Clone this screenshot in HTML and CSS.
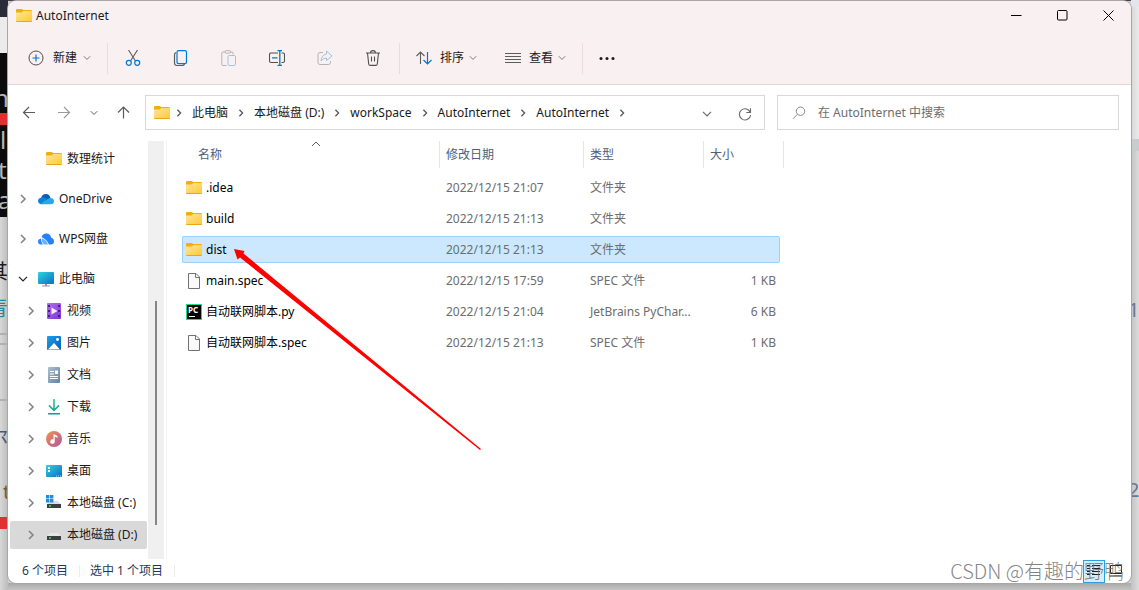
FILE: index.html
```html
<!DOCTYPE html>
<html lang="zh-CN">
<head>
<meta charset="utf-8">
<title>AutoInternet</title>
<link rel="stylesheet" href="styles.css">
</head>
<body>
<svg class="defs" aria-hidden="true">
  <defs>
    <linearGradient id="g-folder" x1="0" y1="0" x2="1" y2="1"><stop offset="0" stop-color="#ffe69c"/><stop offset="1" stop-color="#ffc933"/></linearGradient>
    <linearGradient id="g-screen" x1="0" y1="0" x2="1" y2="1"><stop offset="0" stop-color="#2fd3df"/><stop offset="1" stop-color="#0b6fc0"/></linearGradient>
    <linearGradient id="g-video" x1="0" y1="0" x2="1" y2="1"><stop offset="0" stop-color="#b56cf5"/><stop offset="1" stop-color="#7d35d6"/></linearGradient>
    <linearGradient id="g-pic" x1="0" y1="0" x2="1" y2="1"><stop offset="0" stop-color="#1ca0ee"/><stop offset="1" stop-color="#0a5cab"/></linearGradient>
    <linearGradient id="g-doc" x1="0" y1="0" x2="1" y2="1"><stop offset="0" stop-color="#abc0d4"/><stop offset="1" stop-color="#64819d"/></linearGradient>
    <linearGradient id="g-down" x1="0" y1="0" x2="0" y2="1"><stop offset="0" stop-color="#35c48e"/><stop offset="1" stop-color="#0d9b8f"/></linearGradient>
    <linearGradient id="g-music" x1="0" y1="0" x2="1" y2="1"><stop offset="0" stop-color="#f29050"/><stop offset="1" stop-color="#b1569c"/></linearGradient>
    <symbol id="i-folder" viewBox="0 1 16 16"><path d="M0 3.200Q0 2 1.200 2H5.500Q6.500 2 7 3H14.800Q16 3 16 4.200V8H0Z" fill="#f3ad0c"/><path d="M0 5.500H5.600L7.400 4H15Q16 4 16 5V14Q16 15 15 15H1Q0 15 0 14Z" fill="url(#g-folder)"/><path d="M0 14Q.2 15 1 15H15Q15.800 15 16 14Z" fill="#e9a81c"/></symbol>
    <symbol id="i-right" viewBox="0 0 8 10"><path d="M2 1L6 5L2 9" fill="none" stroke="currentColor" stroke-width="1.600"/></symbol>
    <symbol id="i-down" viewBox="0 0 10 6"><path d="M1 .8L5 4.800L9 .8" fill="none" stroke="currentColor" stroke-width="1.200"/></symbol>
    <symbol id="i-file" viewBox="0 0 16 16"><path d="M2.500 .5H10L13.500 4V15.500H2.500Z" fill="#fafafa" stroke="#727272"/><path d="M9.500 .5V4.500H13.500" fill="none" stroke="#727272"/></symbol>
  </defs>
</svg>
<div class="desktop">
  <aside class="strip" aria-hidden="true">
    <div class="seg s-navy"></div>
    <div class="seg s-pale"></div>
    <div class="seg s-term"><span>n</span><i></i><span class="t-l">l</span><span>t</span><span>a</span></div>
    <div class="seg s-page"><span class="p-han">其</span><span class="p-blue">青</span><hr><hr class="p-second"><hr class="p-third"><span class="p-steel">尔</span><span class="p-gold">t</span><i></i></div>
  </aside>

  <main class="window">
    <header class="chrome">
      <div class="titlebar">
        <svg class="ico"><use href="#i-folder"/></svg>
        <h1>AutoInternet</h1>
        <div class="caption">
          <button aria-label="最小化"><svg width="11" height="11" viewBox="0 0 11 11"><path d="M0 5.500H10.500" stroke="#000"/></svg></button>
          <button aria-label="最大化"><svg width="11" height="11" viewBox="0 0 11 11"><rect x=".5" y=".5" width="9.500" height="9.500" rx="1" fill="none" stroke="#000"/></svg></button>
          <button aria-label="关闭"><svg width="11" height="11" viewBox="0 0 11 11"><path d="M.5 .5L10.500 10.500M10.500 .5L.5 10.500" stroke="#000"/></svg></button>
        </div>
      </div>
      <div class="toolbar">
        <button class="cmd"><svg class="ico" viewBox="0 0 16 16" fill="none"><circle cx="8" cy="8" r="7" stroke="#505050"/><path d="M8 4.500V11.500M4.500 8H11.500" stroke="#0078d4" stroke-width="1.200"/></svg>新建<svg class="tiny"><use href="#i-down"/></svg></button>
        <span class="sep"></span>
        <div class="tools">
          <button aria-label="剪切"><svg class="ico" viewBox="0 0 16 16" fill="none"><path d="M3.500 0L10.500 11M12.500 0L5.500 11" stroke="#5c5c5c" stroke-width="1.100"/><circle cx="3.800" cy="12.800" r="2.500" stroke="#0078d4" stroke-width="1.200"/><circle cx="12.200" cy="12.800" r="2.500" stroke="#0078d4" stroke-width="1.200"/></svg></button>
          <button aria-label="复制"><svg class="ico" viewBox="0 0 16 16" fill="none"><path d="M3 2.500Q1.500 3 1.500 5V13Q1.500 15.500 4 15.500H9Q11 15.500 11.500 14" stroke="#5c5c5c" stroke-width="1.200"/><rect x="4" y=".6" width="9.500" height="13" rx="1.600" stroke="#0078d4" stroke-width="1.200"/></svg></button>
          <button aria-label="粘贴"><svg class="ico" viewBox="0 0 16 16" fill="none"><path d="M5.500 15.500H2Q.8 15.500 .8 14.300V3Q.8 2 2 2H4M9 2H11Q12 2 12 3V4.500" stroke="#b9b1b2"/><rect x="4" y=".6" width="5.500" height="2.600" rx="1.200" stroke="#b9b1b2"/><rect x="7" y="5.500" width="7.500" height="10" rx="1.200" stroke="#9dc3e6"/></svg></button>
          <button aria-label="重命名"><svg class="ico" viewBox="0 0 16 16" fill="none"><path d="M9 3H2Q.5 3 .5 4.500V11Q.5 12.500 2 12.500H9M12.500 3H14Q15.500 3 15.500 4.500V11Q15.500 12.500 14 12.500H12.500" stroke="#505050" stroke-width="1.100"/><path d="M3 7.800H8.500M8.500 .6H13M8.500 15.400H13M10.800 .6V15.400" stroke="#0078d4" stroke-width="1.300"/></svg></button>
          <button aria-label="共享"><svg class="ico" viewBox="0 0 16 16" fill="none"><path d="M6 2.500H3Q1 2.500 1 4.500V12.500Q1 14.500 3 14.500H11.500Q13.500 14.500 13.500 12.500V11" stroke="#b9b1b2"/><path d="M9.500 1L15 6L9.500 10.500V8Q6 8 4 11Q4.500 5 9.500 4Z" stroke="#9dc3e6"/></svg></button>
          <button aria-label="删除"><svg class="ico" viewBox="0 0 16 16" fill="none" stroke="#505050" stroke-width="1.100"><path d="M1 3H15M5.500 3Q5.500 .6 8 .6T10.500 3M2.500 3L3.700 14Q3.900 15.400 5.200 15.400H10.800Q12.100 15.400 12.300 14L13.500 3M6.500 6.500V11.500M9.500 6.500V11.500"/></svg></button>
        </div>
        <span class="sep"></span>
        <button class="cmd"><svg class="ico" viewBox="0 0 16 16" fill="none"><path d="M4.500 14V2M.5 6L4.500 2L8.500 6" stroke="#5c5c5c" stroke-width="1.100"/><path d="M11.500 2V14M7.500 10L11.500 14L15.500 10" stroke="#0078d4" stroke-width="1.200"/></svg>排序<svg class="tiny"><use href="#i-down"/></svg></button>
        <button class="cmd cmd-view"><svg class="ico" viewBox="0 0 16 16"><path d="M0 3.500H16M0 6.500H16M0 9.500H16M0 12.500H16" stroke="#5c5c5c"/></svg>查看<svg class="tiny"><use href="#i-down"/></svg></button>
        <span class="sep"></span>
        <button class="more" aria-label="更多"><svg class="ico" viewBox="0 0 16 16" fill="#1a1a1a"><circle cx="2" cy="8.500" r="1.500"/><circle cx="8" cy="8.500" r="1.500"/><circle cx="14" cy="8.500" r="1.500"/></svg></button>
      </div>
    </header>

    <div class="navrow">
      <div class="history">
        <button aria-label="后退"><svg width="14" height="14" viewBox="0 0 14 14" fill="none" stroke="#5c5c5c" stroke-width="1.200"><path d="M13 6.500H1.500M7 1L1.500 6.500L7 12"/></svg></button>
        <button aria-label="前进"><svg width="14" height="14" viewBox="0 0 14 14" fill="none" stroke="#9a9a9a" stroke-width="1.200"><path d="M1 6.500H12.500M7 1L12.500 6.500L7 12"/></svg></button>
        <button class="recent" aria-label="最近"><svg class="tiny"><use href="#i-down"/></svg></button>
        <button aria-label="上移"><svg width="14" height="14" viewBox="0 0 14 14" fill="none" stroke="#5c5c5c" stroke-width="1.200"><path d="M7.500 12.500V1M2 6.500L7.500 1L13 6.500"/></svg></button>
      </div>
      <nav class="address" aria-label="路径">
        <svg class="ico"><use href="#i-folder"/></svg>
        <svg class="sepchev"><use href="#i-right"/></svg><a href="#">此电脑</a>
        <svg class="sepchev"><use href="#i-right"/></svg><a href="#">本地磁盘 (D:)</a>
        <svg class="sepchev"><use href="#i-right"/></svg><a href="#">workSpace</a>
        <svg class="sepchev"><use href="#i-right"/></svg><a href="#">AutoInternet</a>
        <svg class="sepchev"><use href="#i-right"/></svg><a href="#">AutoInternet</a>
        <svg class="sepchev"><use href="#i-right"/></svg>
        <div class="address-end">
          <button aria-label="展开"><svg width="10" height="6"><use href="#i-down"/></svg></button>
          <button aria-label="刷新"><svg width="14" height="14" viewBox="0 0 14 14" fill="none" stroke="#6a6a6a" stroke-width="1.100"><path d="M12.300 5.500A5.600 5.600 0 1 0 12.600 8M12.500 1.200V5.500H8.300"/></svg></button>
        </div>
      </nav>
      <label class="search">
        <svg width="14" height="14" viewBox="0 0 14 14" fill="none" stroke="#8a8a8a"><circle cx="8.500" cy="5.200" r="4.200"/><path d="M5.500 8.200L1 12.800"/></svg>
        <input type="search" aria-label="搜索" placeholder="在 AutoInternet 中搜索">
      </label>
    </div>

    <div class="body">
      <nav class="tree" aria-label="导航窗格">
        <ul>
          <li class="pinned child"><a href="#"><span class="twist"></span><svg class="ico"><use href="#i-folder"/></svg>数理统计</a></li>
          <li class="root"><a href="#"><svg class="twist"><use href="#i-right"/></svg><svg class="ico" viewBox="0 0 16 16"><path d="M3 8Q3.500 3 8 3Q11.500 3 12.500 7L8 10Z" fill="#0a5eb8"/><path d="M3.500 6.500Q6 5.500 9 8L4 13.200Q0 13 0 10Q0 7 3.500 6.500Z" fill="#1180d8"/><path d="M12 7Q16 7 16 10.300Q16 13.200 13 13.200H4Q3 13.200 2.500 12.900L9 8.500Q10.500 7 12 7Z" fill="#28a8ea"/></svg>OneDrive</a></li>
          <li class="root"><a href="#"><svg class="twist"><use href="#i-right"/></svg><svg class="ico" viewBox="0 0 16 16"><path d="M3.500 6Q5 2 9 2.500Q12.500 3 13 6.500Q16 7.500 16 10.500Q16 13.500 13 13.500H11Q9 8.500 3.500 6Z" fill="#2680f8"/><path d="M3 7.500Q0 8 0 10.800Q0 13.500 3 13.500H5Q3 11 3 7.500Z" fill="#2f86fa"/><path d="M3.700 7.200Q8.500 8.500 10 13.500H6Q3.500 11 3.700 7.200Z" fill="#62b4ff"/></svg>WPS网盘</a></li>
          <li class="root"><a href="#"><svg class="twist open" viewBox="0 0 10 6"><use href="#i-down"/></svg><svg class="ico" viewBox="0 0 16 16"><rect y="1" width="16" height="12" rx="1" fill="url(#g-screen)"/><path d="M7 13H9V14.500H12V15.500H4V14.500H7Z" fill="#8c9aa5"/></svg>此电脑</a></li>
          <li class="child"><a href="#"><svg class="twist"><use href="#i-right"/></svg><svg class="ico" viewBox="0 0 16 16"><rect x="1" width="14" height="16" rx="1" fill="url(#g-video)"/><path d="M5.500 4.500V11.500L11.500 8Z" fill="#f4eefc"/><path d="M3 2V15M13 2V15" stroke="#432076" stroke-width="2" stroke-dasharray="2 3"/></svg>视频</a></li>
          <li class="child"><a href="#"><svg class="twist"><use href="#i-right"/></svg><svg class="ico" viewBox="0 0 16 16"><rect x="1" y="1" width="14" height="14" rx="1" fill="url(#g-pic)"/><path d="M2 14.500L8 8L14 14.500Z" fill="#fff"/><circle cx="11.500" cy="4.500" r="1.400" fill="#fff"/></svg>图片</a></li>
          <li class="child"><a href="#"><svg class="twist"><use href="#i-right"/></svg><svg class="ico" viewBox="0 0 16 16"><rect x="2" width="12" height="16" rx="1" fill="url(#g-doc)"/><path d="M4 4.500H8M4 7H8M4 9.500H12M4 11.500H12" stroke="#fff"/><path d="M9 3.500H12V7H9Z" fill="#fff"/></svg>文档</a></li>
          <li class="child"><a href="#"><svg class="twist"><use href="#i-right"/></svg><svg class="ico" viewBox="0 0 16 16"><path d="M7.200 0H8.800V9.500L12.500 5.800L13.600 7L8 12.600L2.400 7L3.500 5.800L7.200 9.500ZM2 14H14V15.600H2Z" fill="url(#g-down)"/></svg>下载</a></li>
          <li class="child"><a href="#"><svg class="twist"><use href="#i-right"/></svg><svg class="ico" viewBox="0 0 16 16"><circle cx="8" cy="8" r="8" fill="url(#g-music)"/><path d="M7.500 3L11.500 5V6.800L8.700 5.500V10.500A2.200 2.200 0 1 1 7.500 8.600Z" fill="#fff"/></svg>音乐</a></li>
          <li class="child"><a href="#"><svg class="twist"><use href="#i-right"/></svg><svg class="ico" viewBox="0 0 16 16"><rect y="2" width="16" height="12" rx="1" fill="url(#g-screen)"/><path d="M2 5H4M2 8H4" stroke="#fff" stroke-width="1.800"/><path d="M10 13H15" stroke="#bfe4f6" stroke-dasharray="1 1"/></svg>桌面</a></li>
          <li class="child"><a href="#"><svg class="twist"><use href="#i-right"/></svg><svg class="ico" viewBox="0 0 16 16"><path d="M3.500 6H12L15 9.500H1Z" fill="#dcdfe2"/><rect x="1" y="9" width="14" height="4" fill="#3c3f42"/><path d="M3 11H5" stroke="#37e04a" stroke-width="1.500"/><path d="M0 0H3.400V3.400H0ZM4 0H7.400V3.400H4ZM0 4H3.400V7.400H0ZM4 4H7.400V7.400H4Z" fill="#1c8fe3"/></svg>本地磁盘 (C:)</a></li>
          <li class="child"><a href="#" aria-current="true"><svg class="twist"><use href="#i-right"/></svg><svg class="ico" viewBox="0 0 16 16"><path d="M4 6H12L15 9.500H1Z" fill="#e4e6e8"/><rect x="1" y="9" width="14" height="4" fill="#3c3f42"/><path d="M3 11H5" stroke="#37e04a" stroke-width="1.500"/></svg>本地磁盘 (D:)</a></li>
        </ul>
        <div class="scroll"><div class="thumb"></div></div>
      </nav>

      <section class="files">
        <table>
          <colgroup><col class="c-name"><col class="c-date"><col class="c-type"><col class="c-size"></colgroup>
          <thead><tr>
            <th>名称<svg class="sorted" viewBox="0 0 10 6"><path d="M1 5L5 1L9 5" fill="none" stroke="#5c5c5c"/></svg></th><th>修改日期</th><th>类型</th><th>大小</th>
          </tr></thead>
          <tbody>
            <tr><td><span class="name"><svg class="ico"><use href="#i-folder"/></svg>.idea</span></td><td>2022/12/15 21:07</td><td>文件夹</td><td></td></tr>
            <tr><td><span class="name"><svg class="ico"><use href="#i-folder"/></svg>build</span></td><td>2022/12/15 21:13</td><td>文件夹</td><td></td></tr>
            <tr class="selected"><td><span class="name"><svg class="ico"><use href="#i-folder"/></svg>dist</span></td><td>2022/12/15 21:13</td><td>文件夹</td><td></td></tr>
            <tr><td><span class="name"><svg class="ico"><use href="#i-file"/></svg>main.spec</span></td><td>2022/12/15 17:59</td><td>SPEC 文件</td><td>1 KB</td></tr>
            <tr><td><span class="name"><svg class="ico" viewBox="0 0 16 16"><rect x=".5" y=".5" width="15" height="15" fill="#000" stroke="#21d789"/><text class="pc" x="2" y="9">PC</text><path d="M3 12.500H9" stroke="#fff"/></svg>自动联网脚本.py</span></td><td>2022/12/15 21:04</td><td>JetBrains PyChar...</td><td>6 KB</td></tr>
            <tr><td><span class="name"><svg class="ico"><use href="#i-file"/></svg>自动联网脚本.spec</span></td><td>2022/12/15 21:13</td><td>SPEC 文件</td><td>1 KB</td></tr>
          </tbody>
        </table>
        <svg class="pointer" width="248" height="202" viewBox="0 0 248 202" aria-hidden="true"><path d="M0 0L10.500 2L9.500 4.500L247 200L246 201L6 8.500L3.500 10.500Z" fill="#f00"/></svg>
      </section>
    </div>

    <footer class="status">
      <span>6 个项目</span><span>选中 1 个项目</span>
      <div class="views">
        <button class="on" aria-label="详细信息"><svg width="14" height="14" viewBox="0 0 14 14"><path d="M0 1.500H3M5 1.500H13M0 4.500H3M5 4.500H13M0 7.500H3M5 7.500H13M0 10.500H3M5 10.500H13" stroke="#222"/></svg></button>
        <button aria-label="大图标"><svg width="14" height="14" viewBox="0 0 14 14"><path d="M1.500 1.500H12.500V9.500H1.500ZM0 12H13" fill="none" stroke="#222"/></svg></button>
      </div>
    </footer>
    <div class="mark">CSDN @有趣的野鸭</div>
  </main>

  <aside class="strip strip-right" aria-hidden="true">
    <div class="seg r-top"></div><div class="seg r-pale"></div><div class="seg r-band"></div>
    <div class="seg r-page"><span>1</span><span class="r-two">2</span></div>
  </aside>
</div>
</body>
</html>
```
FILE: styles.css
```css
* { box-sizing: border-box; }
body {
  margin: 0;
  font: 12px/16px "Noto Sans", "Noto Sans CJK SC", sans-serif;
  color: #1a1a1a;
}
button { border: 0; padding: 0; background: none; font: inherit; color: inherit; display: flex; align-items: center; justify-content: center; }
a { color: inherit; text-decoration: none; }
svg { display: block; flex: none; }
.defs { position: absolute; width: 0; height: 0; }
.ico { width: 16px; height: 16px; }
.tiny { width: 8px; height: 6px; color: #777; }

/* Desktop behind the window */
.desktop {
  min-height: 100vh;
  display: grid;
  grid-template-columns: 8px minmax(0, 1fr) 8px;
  background: linear-gradient(#47414c 0 1px, #d0d0d0 1px calc(100% - 7px), #a9a9a9 calc(100% - 7px), #c4c4c4);
}
.strip { display: flex; flex-direction: column; overflow: hidden; }
.seg { overflow: hidden; }
.seg span { display: block; }
.seg i { display: block; height: 12px; background: #e03030; }
.s-navy { height: 17px; background: #292c38; }
.s-pale { height: 36px; background: #ebebeb; }
.s-term { height: 164px; background: #0c0c0c; color: #b5b5b5; font: 24px/30px "Noto Sans", sans-serif; padding-top: 30px; }
.s-term span { margin-left: -6px; }
.s-term span + span { margin-left: -2px; }
.s-term .t-l { margin-left: 0; }
.s-page { flex: 1; background: linear-gradient(90deg, #d8d8d8, #bcbcbc); padding-top: 42px; }
.s-page span { font-size: 20px; line-height: 26px; margin-left: -12px; }
.s-page hr { border: 0; height: 2px; margin: 0 0 8px; background: #b0b0b0; }
.s-page .p-blue { color: #2784a8; line-height: 48px; }
.s-page .p-second { margin-bottom: 54px; }
.s-page .p-third { margin-bottom: 24px; }
.s-page .p-steel { color: #3d5c80; }
.s-page .p-gold { color: #7a5a28; font-size: 20px; margin: 28px 0 12px 3px; }
.strip-right { background: linear-gradient(90deg, #b9b9b9, #dadada); }
.r-top { height: 7px; background: #e4e4ec; }
.r-pale { height: 132px; background: linear-gradient(90deg, #d6d6d6, #ececec); }
.r-band { height: 12px; background: #c9cccf; }
.r-page { flex: 1; background: linear-gradient(90deg, #c2c2c2, #dcdcdc); color: #6d7691; font-size: 20px; line-height: 26px; padding-top: 146px; }
.r-page span { margin-left: -3px; }
.r-page .r-two { margin-top: 154px; }

/* Window */
.window {
  position: relative;
  margin: 1px 0 7px;
  display: flex;
  flex-direction: column;
  background: #fff;
  border-radius: 8px;
  overflow: hidden;
  box-shadow: 0 0 0 1px #aaa5a8;
}
.chrome { background: #f9f0f1; border-bottom: 1px solid #e3d6d8; }
.titlebar { height: 29px; display: flex; align-items: center; padding-left: 8px; gap: 4px; }
.titlebar h1 { margin: 0; font: inherit; }
.caption { margin-left: auto; display: flex; }
.caption button { width: 46px; height: 28px; }
.toolbar { height: 54px; display: flex; align-items: center; padding: 2px 0 0 20px; }
.cmd { gap: 8px; }
.cmd:first-child { gap: 9px; }
.cmd .tiny { margin-left: -3px; }
.cmd-view { margin-left: 28px; }
.sep { width: 1px; height: 31px; margin: 0 16px; background: #e8dcde; }
.tools { display: flex; gap: 32px; margin: 0 2px 0 1px; }

.navrow { display: flex; padding: 10px 12px 0 0; }
.history { width: 137px; flex: none; display: flex; align-items: center; gap: 21px; padding-left: 14px; }
.recent { margin: 0 -3px 0 -2px; }
.recent .tiny { color: #555; }
.address, .search { height: 35px; border: 1px solid #d9d9d9; display: flex; align-items: center; }
.address { flex: 598 1 0; padding: 0 12px 0 8px; }
.address .ico { margin-right: 4px; }
.address a { margin: 0 8px 0 9px; white-space: nowrap; }
.sepchev { width: 8px; height: 8px; color: #555; margin: 0 0 0 1px; }
.address-end { margin-left: auto; display: flex; gap: 26px; color: #6a6a6a; padding-top: 2px; }
.search { flex: 326 1 0; margin-left: 12px; padding-left: 14px; gap: 12px; }
.search input { flex: 1; min-width: 0; border: 0; outline: 0; background: none; font: inherit; padding: 0; }
.search input::placeholder { color: #6d6d6d; opacity: 1; }

/* Navigation pane and file list */
.body { flex: 1; display: flex; padding-top: 11px; }
.tree { width: 159px; flex: none; display: flex; border-right: 1px solid #f2f2f2; }
.tree ul { list-style: none; margin: 0; padding: 2px 1px 0 2px; flex: 1; }
.tree li { margin-bottom: 4px; }
.tree a { display: flex; align-items: center; height: 28px; border-radius: 2px; white-space: nowrap; gap: 5px; }
.tree .pinned { margin: 2px 0 12px; }
.tree .root { margin-bottom: 12px; }
.tree .root + .child { margin-top: -8px; }
.root .twist { margin: 0 6px 0 9px; }
.child .twist { margin: 0 6px 0 17px; }
.twist { width: 8px; height: 10px; color: #858585; }
.root .open { width: 10px; height: 6px; color: #222; margin: 0 5px 0 8px; }
.tree a[aria-current] { background: #d9d9d9; }
.scroll { width: 16px; margin-right: 2px; background: #f0f0f0; padding: 160px 0 34px 7px; }
.thumb { width: 2px; height: 100%; background: #868686; }

.files { flex: 1; min-width: 0; position: relative; padding-left: 15px; }
table { width: 598px; table-layout: fixed; border-collapse: separate; border-spacing: 0 4px; margin-top: -4px; }
.c-name { width: 258px; }
.c-date { width: 144px; }
.c-type { width: 120px; }
th, td { padding: 0 0 0 6px; text-align: left; font-weight: 400; position: relative; white-space: nowrap; }
th { height: 29px; color: #4c607a; padding-bottom: 2px; }
th:first-child { padding-left: 16px; }
th::after { content: ""; position: absolute; right: 0; top: 0; height: 27px; width: 1px; background: #e5e5e5; }
th:last-child::after { right: -4px; }
.sorted { position: absolute; top: 0; left: 50%; width: 10px; height: 6px; }
td { height: 27px; color: #6d6d6d; border: solid transparent; border-width: 1px 0; }
td:first-child { color: #000; padding-left: 3px; border-left-width: 1px; border-radius: 2px 0 0 2px; }
td:last-child { text-align: right; padding-right: 3px; border-right-width: 1px; border-radius: 0 2px 2px 0; }
.selected td { background: #cce8ff; border-color: #99d1ff; }
.name { display: flex; align-items: center; gap: 4px; }
.pc { font: bold 8px "Noto Sans", sans-serif; fill: #fff; }
.pointer { position: absolute; left: 67px; top: 108px; }

.status { height: 24px; display: flex; align-items: center; padding-left: 14px; color: #1e395b; }
.status span { padding-right: 11px; margin-right: 10px; border-right: 1px solid #ececec; line-height: 12px; }
.views { margin-left: auto; display: flex; gap: 2px; padding-right: 6px; }
.views button { width: 18px; height: 23px; }
.views .on { width: 22px; border: 1px solid #2aa0d8; background: #d5edf8; }
.mark {
  position: absolute;
  right: 7px;
  bottom: 0;
  font: 300 20px/24px "Noto Sans CJK SC", sans-serif;
  color: rgba(110, 110, 110, .85);
}
```
